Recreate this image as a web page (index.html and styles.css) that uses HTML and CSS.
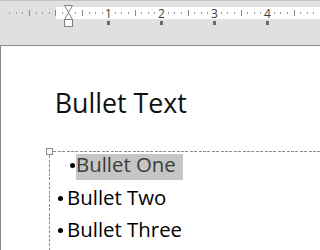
FILE: index.html
```html
<!DOCTYPE html>
<html lang="en">
<head>
<meta charset="utf-8">
<title>Bullet Text</title>
<link rel="stylesheet" href="styles.css">
</head>
<body>
<div class="page">
<div class="ruler-bar">
  <svg class="ruler" width="400" height="44" viewBox="0 0 400 44" xmlns="http://www.w3.org/2000/svg">
    <rect x="56" y="6" width="344" height="12" fill="#ffffff"/>
    <g fill="#9a9a9a">
      <rect x="9" y="11" width="1" height="2"/>
      <rect x="16" y="11" width="1" height="2"/>
      <rect x="22" y="11" width="1" height="2"/>
      <rect x="36" y="11" width="1" height="2"/>
      <rect x="42" y="11" width="1" height="2"/>
      <rect x="49" y="11" width="1" height="2"/>
      <rect x="62" y="11" width="1" height="2"/>
      <rect x="75" y="11" width="1" height="2"/>
      <rect x="89" y="11" width="1" height="2"/>
      <rect x="95" y="11" width="1" height="2"/>
      <rect x="102" y="11" width="1" height="2"/>
      <rect x="115" y="11" width="1" height="2"/>
      <rect x="121" y="11" width="1" height="2"/>
      <rect x="128" y="11" width="1" height="2"/>
      <rect x="141" y="11" width="1" height="2"/>
      <rect x="148" y="11" width="1" height="2"/>
      <rect x="154" y="11" width="1" height="2"/>
      <rect x="168" y="11" width="1" height="2"/>
      <rect x="174" y="11" width="1" height="2"/>
      <rect x="181" y="11" width="1" height="2"/>
      <rect x="194" y="11" width="1" height="2"/>
      <rect x="201" y="11" width="1" height="2"/>
      <rect x="207" y="11" width="1" height="2"/>
      <rect x="221" y="11" width="1" height="2"/>
      <rect x="227" y="11" width="1" height="2"/>
      <rect x="234" y="11" width="1" height="2"/>
      <rect x="247" y="11" width="1" height="2"/>
      <rect x="254" y="11" width="1" height="2"/>
      <rect x="260" y="11" width="1" height="2"/>
      <rect x="274" y="11" width="1" height="2"/>
      <rect x="280" y="11" width="1" height="2"/>
      <rect x="287" y="11" width="1" height="2"/>
      <rect x="300" y="11" width="1" height="2"/>
      <rect x="307" y="11" width="1" height="2"/>
      <rect x="313" y="11" width="1" height="2"/>
    </g>
    <g fill="#8a8a8a">
      <rect x="29" y="9" width="1" height="6"/>
      <rect x="55" y="9" width="1" height="6"/>
      <rect x="82" y="9" width="1" height="6"/>
      <rect x="135" y="9" width="1" height="6"/>
      <rect x="188" y="9" width="1" height="6"/>
      <rect x="241" y="9" width="1" height="6"/>
      <rect x="294" y="9" width="1" height="6"/>
    </g>
    <g class="num" fill="#3c3c3c" text-anchor="middle">
      <text x="108.5" y="17">1</text>
      <text x="161.5" y="17">2</text>
      <text x="214.5" y="17">3</text>
      <text x="267.5" y="17">4</text>
    </g>
    <g fill="#6a6a6a">
      <rect x="107" y="20" width="3" height="4"/>
      <rect x="160" y="20" width="3" height="4"/>
      <rect x="213" y="20" width="3" height="4"/>
      <rect x="266" y="20" width="3" height="4"/>
    </g>
    <g fill="#ffffff" stroke="#808080" stroke-width="1">
      <path d="M64.5 4.5 H72.5 L68.5 11.5 Z"/>
      <path d="M68.5 11.5 L72.5 18.5 H64.5 Z"/>
      <rect x="64.5" y="18.5" width="8" height="7"/>
    </g>
  </svg>
</div>
<div class="slide">
  <h1 class="title">Bullet Text</h1>
  <div class="textbox">
    <span class="handle"></span>
    <ul class="bullets">
      <li class="selected"><span class="dot"></span><span class="hl">Bullet One</span></li>
      <li><span class="dot"></span><span>Bullet Two</span></li>
      <li><span class="dot"></span><span>Bullet Three</span></li>
    </ul>
  </div>
</div>
</div>
</body>
</html>
```

FILE: styles.css
```css
html, body {
  margin: 0;
  padding: 0;
  height: 100%;
  overflow: hidden;
}

body {
  background: #ffffff;
  font-family: "Open Sans", "Noto Sans", sans-serif;
  color: #000000;
}

.page {
  height: 250px;
  overflow: hidden;
}

.ruler-bar {
  height: 44px;
  background: #e0e0e0;
  border-top: 1px solid #c4c4c4;
  border-bottom: 1px solid #8a8a8a;
  overflow: hidden;
}

.ruler {
  display: block;
}

.ruler .num {
  font-family: "Open Sans", "Noto Sans", sans-serif;
  font-size: 12px;
}

.slide {
  height: 204px;
  border-left: 1px solid #8a8a8a;
  background: #ffffff;
  overflow: hidden;
}

.title {
  margin: 39px 0 0 53.7px;
  font-size: 26.8px;
  line-height: 36px;
  font-weight: 400;
  color: #111111;
}

.textbox {
  position: relative;
  margin: 30.3px 0 0 48px;
  height: 110px;
  background:
    repeating-linear-gradient(90deg, #8c8c8c 0 3px, transparent 3px 4.4px) top left / 100% 1px no-repeat,
    repeating-linear-gradient(180deg, #8c8c8c 0 3px, transparent 3px 4.4px) top left / 1px 100% no-repeat;
}

.handle {
  position: absolute;
  left: -3px;
  top: -3px;
  width: 5px;
  height: 5px;
  border: 1px solid #8a8a8a;
  background: #ffffff;
}

.bullets {
  list-style: none;
  margin: 0;
  padding: 0;
}

.bullets li {
  font-size: 20.4px;
  line-height: 27px;
  height: 27px;
  margin-bottom: 5.5px;
  white-space: nowrap;
}

.dot {
  display: inline-block;
  width: 5px;
  height: 5px;
  border-radius: 50%;
  background: #000000;
  margin: 0 4.6px 4px 8.5px;
}

.selected .dot {
  margin: 0 1.5px 4.5px 20.5px;
}

.hl {
  color: #3c3c3c;
  padding: 0 7px 2px 0;
  background: linear-gradient(#c6c6c6, #c6c6c6) no-repeat;
  background-position: 0 4px;
}
```
